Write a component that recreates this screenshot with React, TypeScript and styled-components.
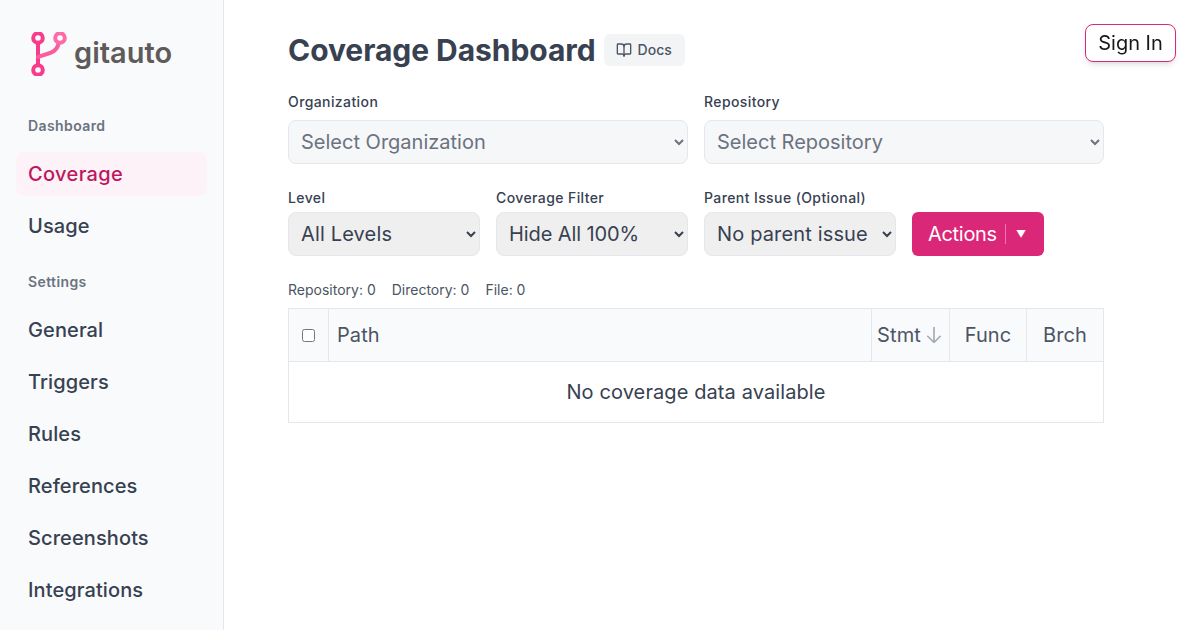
import React from "react";
import styled, { createGlobalStyle } from "styled-components";

const GlobalStyle = createGlobalStyle`
  html, body {
    margin: 0;
    height: 100%;
    overflow: hidden;
    background: #fff;
    font-family: Inter, "Liberation Sans", sans-serif;
  }
  * { box-sizing: border-box; }
`;

const Page = styled.div`
  display: flex;
  height: 630px;
  overflow: hidden;
`;

const Sidebar = styled.aside`
  width: 224px;
  flex-shrink: 0;
  background: #f9fafb;
  border-right: 1px solid #e5e7eb;
  padding: 32px 16px 0;
`;

const LogoRow = styled.div`
  display: flex;
  align-items: center;
  gap: 7px;
  height: 44px;
  padding-left: 15px;
  margin-bottom: 40px;
`;

const LogoText = styled.span`
  font-size: 29px;
  font-weight: 600;
  color: #5f5b5b;
  position: relative;
  top: -2px;
`;

const SectionLabel = styled.div<{ $first?: boolean }>`
  font-size: 14px;
  line-height: 20px;
  font-weight: 600;
  letter-spacing: 0.4px;
  color: #6b7280;
  padding-left: 12px;
  margin-top: ${(p) => (p.$first ? "0" : "24px")};
  margin-bottom: 16px;
`;

const NavList = styled.nav`
  display: flex;
  flex-direction: column;
  gap: 8px;
`;

const NavItem = styled.a<{ $active?: boolean }>`
  display: flex;
  align-items: center;
  height: 44px;
  padding: 0 12px;
  border-radius: 8px;
  font-size: 20px;
  font-weight: 500;
  letter-spacing: ${(p) => (p.$active ? "0.35px" : "0.1px")};
  color: ${(p) => (p.$active ? "#be185d" : "#374151")};
  background: ${(p) => (p.$active ? "#fdf2f8" : "transparent")};
`;

const Main = styled.main`
  flex: 1;
  padding: 32px 96px 0 64px;
`;

const TitleRow = styled.div`
  display: flex;
  align-items: center;
  gap: 8px;
  height: 36px;
  margin-bottom: 24px;
`;

const Title = styled.h1`
  margin: 0;
  font-size: 30px;
  line-height: 36px;
  font-weight: 700;
  letter-spacing: -0.05px;
  color: #374151;
`;

const DocsLink = styled.a`
  display: flex;
  align-items: center;
  gap: 6px;
  width: 81px;
  height: 32px;
  padding: 0 12px 1px;
  border-radius: 6px;
  background: #f3f4f6;
  font-size: 14px;
  font-weight: 500;
  color: #4b5563;
`;

const FilterRow = styled.div`
  display: flex;
  align-items: flex-end;
  gap: 16px;
  margin-bottom: 24px;
`;

const Field = styled.label<{ $wide?: boolean }>`
  display: flex;
  flex-direction: column;
  gap: ${(p) => (p.$wide ? "8px" : "4px")};
  width: ${(p) => (p.$wide ? "400px" : "192px")};
  font-size: 14px;
  line-height: 20px;
  font-weight: 500;
  letter-spacing: 0.4px;
  color: #374151;
`;

const Select = styled.select<{ $muted?: boolean; $tight?: boolean }>`
  width: 100%;
  height: 44px;
  padding: 0 8px;
  border: 1px solid #e5e7eb;
  border-radius: 8px;
  font-family: inherit;
  font-size: 20px;
  letter-spacing: ${(p) => (p.$tight ? "-0.1px" : p.$muted ? "0" : "0.15px")};
  opacity: 1;
  color: ${(p) => (p.$muted ? "#6b7280" : "#374151")};
  background: ${(p) => (p.$muted ? "#f6f7f9" : "#efefef")};
`;

const ActionsButton = styled.button`
  display: flex;
  align-items: center;
  height: 44px;
  width: 132px;
  padding: 0 16px;
  border: 0;
  border-radius: 6px;
  background: #db2777;
  color: #fff;
  font-family: inherit;
  font-size: 20px;
  letter-spacing: -0.3px;
`;

const ActionsCaret = styled.span`
  display: flex;
  align-items: center;
  height: 20px;
  margin-left: 8px;
  padding-left: 10px;
  border-left: 1px solid #f472b6;
  font-size: 10px;
`;

const Counts = styled.div`
  display: flex;
  gap: 16px;
  font-size: 14px;
  line-height: 20px;
  color: #4b5563;
  margin-bottom: 8px;
`;

const Table = styled.table`
  width: 816px;
  table-layout: fixed;
  border-collapse: collapse;
  font-size: 20px;
`;

const HeadCell = styled.th<{ $width?: number; $center?: boolean }>`
  width: ${(p) => (p.$width ? `${p.$width}px` : "auto")};
  height: 53px;
  padding: ${(p) => (p.$center ? "0" : "0 8px")};
  border: 1px solid #e5e7eb;
  background: #f9fafb;
  color: #4b5563;
  font-weight: 400;
  letter-spacing: 0.1px;
  text-align: ${(p) => (p.$center ? "center" : "left")};
  white-space: nowrap;
`;

const SortHead = styled.span`
  display: inline-flex;
  align-items: center;
  gap: 3px;
`;

const Checkbox = styled.input`
  display: block;
  width: 13px;
  height: 13px;
  margin: 0 auto;
`;

const EmptyCell = styled.td`
  height: 61px;
  border: 1px solid #e5e7eb;
  text-align: center;
  letter-spacing: 0.1px;
  color: #374151;
`;

const SignIn = styled.button`
  position: fixed;
  top: 24px;
  right: 24px;
  width: 91px;
  height: 38px;
  padding: 0;
  border: 1px solid #db2777;
  border-radius: 8px;
  background: #fff;
  color: #171717;
  font-family: inherit;
  font-size: 20px;
  box-shadow: 0 4px 6px -1px rgba(0, 0, 0, 0.1), 0 2px 4px -2px rgba(0, 0, 0, 0.1);
`;

function Logo() {
  return (
    <svg width="36" height="44" viewBox="0 0 36 44" fill="none" strokeWidth="4">
      <path d="M7 12V32" stroke="#f73c8b" />
      <path d="M7 25C16 21 25 22 27.5 12" stroke="#fb5c9e" strokeLinecap="round" />
      <circle cx="7" cy="6" r="4.8" stroke="#f73c8b" />
      <circle cx="29" cy="6" r="4.8" stroke="#fd6ca8" />
      <circle cx="7" cy="38" r="4.8" stroke="#f73c8b" />
    </svg>
  );
}

function BookIcon() {
  return (
    <svg width="16" height="16" viewBox="0 0 24 24" fill="none" stroke="#4b5563" strokeWidth="2" strokeLinecap="round" strokeLinejoin="round">
      <path d="M12 7v14" />
      <path d="M3 18a1 1 0 0 1-1-1V4a1 1 0 0 1 1-1h5a4 4 0 0 1 4 4 4 4 0 0 1 4-4h5a1 1 0 0 1 1 1v13a1 1 0 0 1-1 1h-6a3 3 0 0 0-3 3 3 3 0 0 0-3-3z" />
    </svg>
  );
}

function ArrowDown() {
  return (
    <svg width="20" height="20" viewBox="0 0 16 16" fill="none" stroke="#a3a9b8" strokeWidth="1.3" strokeLinecap="round" strokeLinejoin="round">
      <path d="M8 2v12M3 9l5 5 5-5" />
    </svg>
  );
}

export default function App() {
  return (
    <Page>
      <GlobalStyle />
      <Sidebar>
        <LogoRow>
          <Logo />
          <LogoText>gitauto</LogoText>
        </LogoRow>
        <SectionLabel $first>Dashboard</SectionLabel>
        <NavList>
          <NavItem $active>Coverage</NavItem>
          <NavItem>Usage</NavItem>
        </NavList>
        <SectionLabel>Settings</SectionLabel>
        <NavList>
          <NavItem>General</NavItem>
          <NavItem>Triggers</NavItem>
          <NavItem>Rules</NavItem>
          <NavItem>References</NavItem>
          <NavItem>Screenshots</NavItem>
          <NavItem>Integrations</NavItem>
        </NavList>
      </Sidebar>
      <Main>
        <TitleRow>
          <Title>Coverage Dashboard</Title>
          <DocsLink>
            <BookIcon />
            Docs
          </DocsLink>
        </TitleRow>
        <FilterRow>
          <Field $wide>
            Organization
            <Select $muted disabled>
              <option>Select Organization</option>
            </Select>
          </Field>
          <Field $wide>
            Repository
            <Select $muted disabled>
              <option>Select Repository</option>
            </Select>
          </Field>
        </FilterRow>
        <FilterRow>
          <Field>
            Level
            <Select>
              <option>All Levels</option>
            </Select>
          </Field>
          <Field>
            Coverage Filter
            <Select $tight>
              <option>Hide All 100%</option>
            </Select>
          </Field>
          <Field>
            Parent Issue (Optional)
            <Select>
              <option>No parent issue</option>
            </Select>
          </Field>
          <ActionsButton>
            Actions
            <ActionsCaret>▼</ActionsCaret>
          </ActionsButton>
        </FilterRow>
        <Counts>
          <span>Repository: 0</span>
          <span>Directory: 0</span>
          <span>File: 0</span>
        </Counts>
        <Table>
          <thead>
            <tr>
              <HeadCell $width={40}>
                <Checkbox type="checkbox" />
              </HeadCell>
              <HeadCell>Path</HeadCell>
              <HeadCell $width={78} $center>
                <SortHead>
                  Stmt
                  <ArrowDown />
                </SortHead>
              </HeadCell>
              <HeadCell $width={77} $center>Func</HeadCell>
              <HeadCell $width={77} $center>Brch</HeadCell>
            </tr>
          </thead>
          <tbody>
            <tr>
              <EmptyCell colSpan={5}>No coverage data available</EmptyCell>
            </tr>
          </tbody>
        </Table>
      </Main>
      <SignIn>Sign In</SignIn>
    </Page>
  );
}
